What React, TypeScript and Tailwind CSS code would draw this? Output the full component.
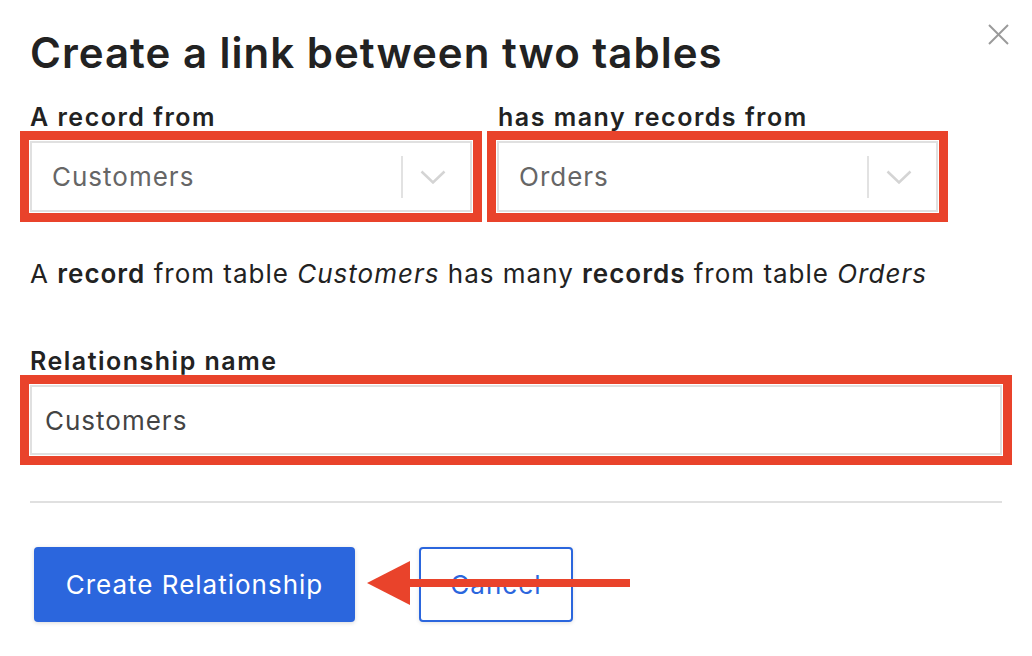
import React from "react";

function RedBox({ width, children }: { width: string; children: React.ReactNode }) {
  return (
    <div className={`${width} border-[9px] border-[#e9432b] p-px bg-white`}>{children}</div>
  );
}

function Select({ value }: { value: string }) {
  return (
    <div className="flex h-[71px] items-center border-2 border-[#e0e0e0] bg-white">
      <div className="flex-1 pl-[20px] text-[26px] tracking-[1px] text-[#666666]">{value}</div>
      <div className="h-[42px] w-[2px] bg-[#e2e2e2]" />
      <div className="flex w-[62px] items-center justify-center pr-[2px]">
        <svg width="26" height="14" viewBox="0 0 26 14">
          <polyline points="1.5,1.5 13,12.5 24.5,1.5" fill="none" stroke="#d4d4d4" strokeWidth="2.5" />
        </svg>
      </div>
      <div className="w-[5px]" />
    </div>
  );
}

export default function App() {
  return (
    <div
      className="relative h-[656px] w-[1032px] overflow-hidden bg-white pl-[20px] pt-[28px] text-[#222222]"
      style={{ fontFamily: "Inter, 'Noto Sans', sans-serif" }}
    >
      <h1 className="ml-[10px] text-[42px] font-semibold leading-[50px] tracking-[1px]">
        Create a link between two tables
      </h1>

      <div className="mt-[25px] flex gap-[5px]">
        <div className="w-[462px]">
          <div className="ml-[10px] text-[25px] font-semibold leading-[28px] tracking-[1.5px]">A record from</div>
          <RedBox width="w-[462px]">
            <Select value="Customers" />
          </RedBox>
        </div>
        <div className="w-[461px]">
          <div className="ml-[11px] text-[25px] font-semibold leading-[28px] tracking-[1.5px]">has many records from</div>
          <RedBox width="w-[461px]">
            <Select value="Orders" />
          </RedBox>
        </div>
      </div>

      <p className="ml-[10px] mt-[36px] text-[26px] leading-[32px] tracking-[1px]">
        A <span className="font-semibold">record</span> from table <em>Customers</em> has many{" "}
        <span className="font-semibold">records</span> from table <em>Orders</em>
      </p>

      <div className="ml-[10px] mt-[57px] text-[25px] font-semibold leading-[28px] tracking-[1.5px]">Relationship name</div>
      <RedBox width="w-[992px]">
        <div className="flex h-[70px] items-center border-2 border-[#e0e0e0] pl-[13px] text-[26px] tracking-[1px] text-[#444444]">
          Customers
        </div>
      </RedBox>

      <div className="ml-[10px] mt-[36px] h-[2px] w-[972px] bg-[#e0e0e0]" />

      <div className="ml-[14px] mt-[44px] flex gap-[64px]">
        <button className="flex h-[75px] w-[321px] items-center justify-center rounded-[4px] bg-[#2b66dd] text-[26px] tracking-[1px] text-white shadow-[0_1px_4px_rgba(0,0,0,0.15)]">
          Create Relationship
        </button>
        <button className="flex h-[75px] w-[154px] items-center justify-center rounded-[4px] border-2 border-[#2b66dd] bg-white text-[26px] tracking-[1px] text-[#2b66dd] shadow-[0_1px_4px_rgba(0,0,0,0.12)]">
          Cancel
        </button>
      </div>

      <svg className="absolute left-[360px] top-[550px]" width="280" height="65" viewBox="0 0 280 65">
        <polygon points="7,33 50,11 50,55" fill="#e9432b" />
        <rect x="48" y="29" width="222" height="8" fill="#e9432b" />
      </svg>

      <svg className="absolute left-[988px] top-[24px]" width="21" height="21" viewBox="0 0 21 21">
        <line x1="1" y1="1" x2="20" y2="20" stroke="#9a9a9a" strokeWidth="2" />
        <line x1="20" y1="1" x2="1" y2="20" stroke="#9a9a9a" strokeWidth="2" />
      </svg>
    </div>
  );
}
